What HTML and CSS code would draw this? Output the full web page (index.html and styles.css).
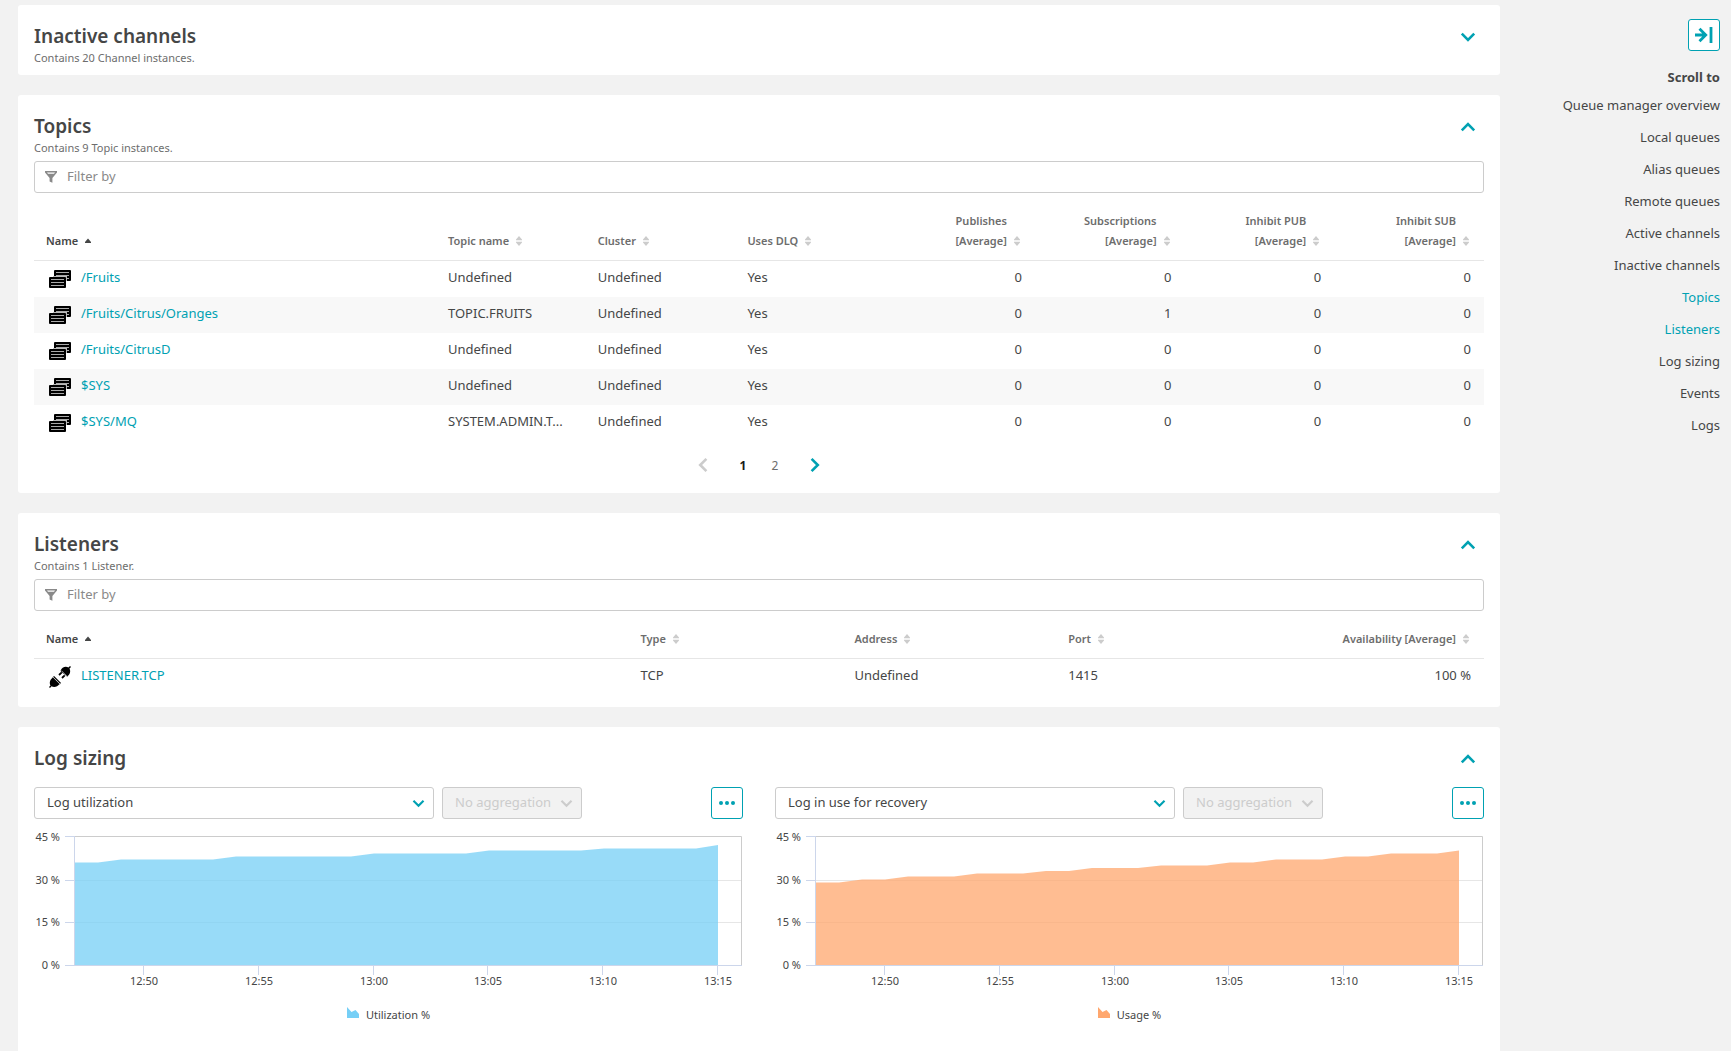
FILE: index.html
```html
<!DOCTYPE html>
<html lang="en">
<head>
  <meta charset="UTF-8">
  <meta name="viewport" content="width=device-width, initial-scale=1">
  <title>Queue manager</title>
  <link rel="stylesheet" href="styles.css">
</head>
<body>
  <!-- Shared icons -->
  <svg class="sprite" aria-hidden="true">
    <symbol id="down" viewBox="0 0 16 10"><path d="M1.8 1.6 8 7.8l6.2-6.2" fill="none" stroke="currentColor" stroke-width="2.6"/></symbol>
    <symbol id="up" viewBox="0 0 16 10"><path d="M1.8 8.4 8 2.2l6.2 6.2" fill="none" stroke="currentColor" stroke-width="2.6"/></symbol>
    <symbol id="prev" viewBox="0 0 10 16"><path d="M8.4 1.8 2.2 8l6.2 6.2" fill="none" stroke="currentColor" stroke-width="2.6"/></symbol>
    <symbol id="next" viewBox="0 0 10 16"><path d="M1.6 1.8 7.8 8l-6.2 6.2" fill="none" stroke="currentColor" stroke-width="2.6"/></symbol>
    <symbol id="sort" viewBox="0 0 6 10"><path d="M3 0 6 3.5v.8H0v-.8zM0 5.7h6v.8L3 10 0 6.500z" fill="currentColor"/></symbol>
    <symbol id="sorted" viewBox="0 0 6 10"><path d="M3 2.500 6 6v1H0V6z" fill="currentColor"/></symbol>
    <symbol id="funnel" viewBox="0 0 12 12"><path d="M0 0h12v1.6L7.400 7v4.800l-2.800-1.400V7L0 1.600zM2 1.500l1 1.200h6l1-1.200z" fill="currentColor" fill-rule="evenodd"/></symbol>
    <symbol id="topic" viewBox="0 0 22 22">
      <rect x="5" y="2" width="17" height="11" rx="1"/>
      <path d="M7 4.500h13M7 7.500h13M17 10.500h3" stroke="#aaa"/>
      <path d="M4 8h14v5h-14z" fill="#bbb"/>
      <rect x="0" y="9" width="17" height="11" rx="1"/>
      <path d="M2 11.500h13M2 14.500h13M2 17.500h13" stroke="#aaa"/>
    </symbol>
    <symbol id="plug" viewBox="0 0 22 22">
      <path d="M11.500 5c1.500-4 5-5 8-3.500L21 0l1 1-1.500 1.500C22 5.500 21 9 18 10.500z"/>
      <path d="M12.800 6.300 10 9M15.700 9.300 13 12" fill="none" stroke="#000" stroke-width="1.800"/>
      <path d="M12.600 4.600 18.700 10.700M3.400 11.300l7.300 7.300" fill="none" stroke="#888" stroke-width=".8"/>
      <path d="M4 11.500 10.500 18c-2 3-5.500 3.500-8 2.300L1 22l-1-1 1.500-1.500C0 16.500 1 13.500 4 11.500z"/>
      <path d="M4.600 10.400 11.600 17.400" fill="none" stroke="#000" stroke-width="1.300"/>
    </symbol>
    <symbol id="area" viewBox="0 0 12 11"><path d="M0 11V0l4.500 5L8.500 3 12 7v4z" fill="currentColor"/></symbol>
  </svg>

  <main class="main">
    <section class="card">
      <div class="card-head">
        <div>
          <h2>Inactive channels</h2>
          <p>Contains 20 Channel instances.</p>
        </div>
        <button class="toggle" aria-label="Expand"><svg><use href="#down"/></svg></button>
      </div>
    </section>

    <section class="card card-topics">
      <div class="card-head">
        <div>
          <h2>Topics</h2>
          <p>Contains 9 Topic instances.</p>
        </div>
        <button class="toggle" aria-label="Collapse"><svg><use href="#up"/></svg></button>
      </div>
      <label class="filter">
        <svg><use href="#funnel"/></svg>
        <input type="text" placeholder="Filter by" aria-label="Filter topics">
      </label>
      <table class="topics">
        <thead>
          <tr>
            <th class="name"><button class="active">Name <svg><use href="#sorted"/></svg></button></th>
            <th><button>Topic name <svg><use href="#sort"/></svg></button></th>
            <th><button>Cluster <svg><use href="#sort"/></svg></button></th>
            <th><button>Uses DLQ <svg><use href="#sort"/></svg></button></th>
            <th class="num"><button><span>Publishes<br>[Average]</span> <svg><use href="#sort"/></svg></button></th>
            <th class="num"><button><span>Subscriptions<br>[Average]</span> <svg><use href="#sort"/></svg></button></th>
            <th class="num"><button><span>Inhibit PUB<br>[Average]</span> <svg><use href="#sort"/></svg></button></th>
            <th class="num"><button><span>Inhibit SUB<br>[Average]</span> <svg><use href="#sort"/></svg></button></th>
          </tr>
        </thead>
        <tbody>
          <tr>
            <td><div class="entity"><svg><use href="#topic"/></svg><a href="#">/Fruits</a></div></td>
            <td>Undefined</td><td>Undefined</td><td>Yes</td>
            <td class="num">0</td><td class="num">0</td><td class="num">0</td><td class="num">0</td>
          </tr>
          <tr>
            <td><div class="entity"><svg><use href="#topic"/></svg><a href="#">/Fruits/Citrus/Oranges</a></div></td>
            <td>TOPIC.FRUITS</td><td>Undefined</td><td>Yes</td>
            <td class="num">0</td><td class="num">1</td><td class="num">0</td><td class="num">0</td>
          </tr>
          <tr>
            <td><div class="entity"><svg><use href="#topic"/></svg><a href="#">/Fruits/CitrusD</a></div></td>
            <td>Undefined</td><td>Undefined</td><td>Yes</td>
            <td class="num">0</td><td class="num">0</td><td class="num">0</td><td class="num">0</td>
          </tr>
          <tr>
            <td><div class="entity"><svg><use href="#topic"/></svg><a href="#">$SYS</a></div></td>
            <td>Undefined</td><td>Undefined</td><td>Yes</td>
            <td class="num">0</td><td class="num">0</td><td class="num">0</td><td class="num">0</td>
          </tr>
          <tr>
            <td><div class="entity"><svg><use href="#topic"/></svg><a href="#">$SYS/MQ</a></div></td>
            <td>SYSTEM.ADMIN.T...</td><td>Undefined</td><td>Yes</td>
            <td class="num">0</td><td class="num">0</td><td class="num">0</td><td class="num">0</td>
          </tr>
        </tbody>
      </table>
      <nav class="pager" aria-label="Pages">
        <button class="arrow" disabled aria-label="Previous page"><svg><use href="#prev"/></svg></button>
        <button class="page current">1</button>
        <button class="page">2</button>
        <button class="arrow" aria-label="Next page"><svg><use href="#next"/></svg></button>
      </nav>
    </section>

    <section class="card card-listeners">
      <div class="card-head">
        <div>
          <h2>Listeners</h2>
          <p>Contains 1 Listener.</p>
        </div>
        <button class="toggle" aria-label="Collapse"><svg><use href="#up"/></svg></button>
      </div>
      <label class="filter">
        <svg><use href="#funnel"/></svg>
        <input type="text" placeholder="Filter by" aria-label="Filter listeners">
      </label>
      <table class="listeners">
        <thead>
          <tr>
            <th class="name"><button class="active">Name <svg><use href="#sorted"/></svg></button></th>
            <th><button>Type <svg><use href="#sort"/></svg></button></th>
            <th><button>Address <svg><use href="#sort"/></svg></button></th>
            <th><button>Port <svg><use href="#sort"/></svg></button></th>
            <th class="num"><button>Availability [Average] <svg><use href="#sort"/></svg></button></th>
          </tr>
        </thead>
        <tbody>
          <tr>
            <td><div class="entity"><svg><use href="#plug"/></svg><a href="#">LISTENER.TCP</a></div></td>
            <td>TCP</td><td>Undefined</td><td>1415</td><td class="num">100 %</td>
          </tr>
        </tbody>
      </table>
    </section>

    <section class="card card-log">
      <div class="card-head">
        <h2>Log sizing</h2>
        <button class="toggle" aria-label="Collapse"><svg><use href="#up"/></svg></button>
      </div>
      <div class="charts">
        <div class="chart">
          <div class="controls">
            <div class="select metric">
              <select aria-label="Metric"><option>Log utilization</option></select>
              <svg><use href="#down"/></svg>
            </div>
            <div class="select aggregation">
              <select aria-label="Aggregation" disabled><option>No aggregation</option></select>
              <svg><use href="#down"/></svg>
            </div>
            <button class="square more" aria-label="More">
              <svg viewBox="0 0 16 4"><circle cx="2" cy="2" r="2"/><circle cx="8" cy="2" r="2"/><circle cx="14" cy="2" r="2"/></svg>
            </button>
          </div>
          <svg class="plot" viewBox="0 0 709 160">
            <path class="grid" d="M41 54.500h667M41 96.500h667"/>
            <path class="frame" d="M40.500 10.500h667v129"/>
            <path class="fill blue" d="M40.500 139.500V36.500H64L87 33.500H179L202 30.500H317L340 27.500H432L455 24.500H547L570 22.500H662L684 19V139.500z"/>
            <path class="axis" d="M31 10.500h9M31 54.500h9M31 96.500h9M31 139.500h677M40.500 10v129M109.500 140v9M224.500 140v9M339.500 140v9M453.500 140v9M568.500 140v9M683.500 140v9"/>
            <g class="y-labels">
              <text x="26" y="15">45 %</text><text x="26" y="58">30 %</text><text x="26" y="100">15 %</text><text x="26" y="143">0 %</text>
            </g>
            <g class="x-labels">
              <text x="110" y="159">12:50</text><text x="225" y="159">12:55</text><text x="340" y="159">13:00</text><text x="454" y="159">13:05</text><text x="569" y="159">13:10</text><text x="684" y="159">13:15</text>
            </g>
          </svg>
          <div class="legend"><svg class="blue"><use href="#area"/></svg>Utilization %</div>
        </div>

        <div class="chart">
          <div class="controls">
            <div class="select metric">
              <select aria-label="Metric"><option>Log in use for recovery</option></select>
              <svg><use href="#down"/></svg>
            </div>
            <div class="select aggregation">
              <select aria-label="Aggregation" disabled><option>No aggregation</option></select>
              <svg><use href="#down"/></svg>
            </div>
            <button class="square more" aria-label="More">
              <svg viewBox="0 0 16 4"><circle cx="2" cy="2" r="2"/><circle cx="8" cy="2" r="2"/><circle cx="14" cy="2" r="2"/></svg>
            </button>
          </div>
          <svg class="plot" viewBox="0 0 709 160">
            <path class="grid" d="M41 54.500h667M41 96.500h667"/>
            <path class="frame" d="M40.500 10.500h667v129"/>
            <path class="fill orange" d="M40.500 139.500V56.500H64L87 53.500H110L133 50.500H179L202 47.500H248L271 45H294L317 42H363L386 39.500H432L455 36.500H478L501 33.500H547L570 30.500H593L616 27.500H662L684 24.500V139.500z"/>
            <path class="axis" d="M31 10.500h9M31 54.500h9M31 96.500h9M31 139.500h677M40.500 10v129M109.500 140v9M224.500 140v9M339.500 140v9M453.500 140v9M568.500 140v9M683.500 140v9"/>
            <g class="y-labels">
              <text x="26" y="15">45 %</text><text x="26" y="58">30 %</text><text x="26" y="100">15 %</text><text x="26" y="143">0 %</text>
            </g>
            <g class="x-labels">
              <text x="110" y="159">12:50</text><text x="225" y="159">12:55</text><text x="340" y="159">13:00</text><text x="454" y="159">13:05</text><text x="569" y="159">13:10</text><text x="684" y="159">13:15</text>
            </g>
          </svg>
          <div class="legend"><svg class="orange"><use href="#area"/></svg>Usage %</div>
        </div>
      </div>
    </section>
  </main>

  <aside class="sidebar">
    <button class="square" aria-label="Hide navigation">
      <svg class="collapse" viewBox="0 0 18 16"><path d="M0 8h9.500M4.500 1.800 10.700 8l-6.200 6.200M16 0v16" fill="none" stroke="currentColor" stroke-width="2.8"/></svg>
    </button>
    <h3>Scroll to</h3>
    <nav>
      <a href="#">Queue manager overview</a>
      <a href="#">Local queues</a>
      <a href="#">Alias queues</a>
      <a href="#">Remote queues</a>
      <a href="#">Active channels</a>
      <a href="#">Inactive channels</a>
      <a href="#" class="active">Topics</a>
      <a href="#" class="active">Listeners</a>
      <a href="#">Log sizing</a>
      <a href="#">Events</a>
      <a href="#">Logs</a>
    </nav>
  </aside>
</body>
</html>
```
FILE: styles.css
```css
* {
  box-sizing: border-box;
}
body {
  margin: 0;
  min-height: 100vh;
  display: flex;
  background: #f2f2f2;
  color: #454646;
  font-family: "Noto Sans", "Open Sans", sans-serif;
  font-size: 13px;
}
h2, h3, p {
  margin: 0;
}
a {
  color: #00a1b2;
  text-decoration: none;
}
button, input, select {
  font: inherit;
  color: inherit;
}
button {
  padding: 0;
  border: 0;
  background: none;
}
svg {
  display: block;
  flex: none;
}
.sprite {
  position: absolute;
  width: 0;
  height: 0;
}

/* Cards */
.main {
  flex: 1;
  min-width: 0;
  display: flex;
  flex-direction: column;
  gap: 20px;
  padding: 5px 0 0 18px;
}
.card {
  background: #fff;
  border-radius: 3px;
  padding: 19px 16px 7px;
}
.card-topics { padding-bottom: 16px; }
.card-listeners { padding-bottom: 12px; }
.card-log {
  flex: 1;
  border-radius: 3px 3px 0 0;
}
.card-head {
  display: flex;
  justify-content: space-between;
  align-items: flex-start;
}
.card-head h2 {
  font-size: 19px;
  line-height: 24px;
  font-weight: 600;
}
.card-head p {
  font-size: 11px;
  line-height: 20px;
  color: #6d6d6d;
}
.toggle {
  width: 32px;
  height: 26px;
  display: flex;
  align-items: center;
  justify-content: center;
  color: #00a1b2;
}
.toggle svg {
  width: 16px;
  height: 10px;
}

/* Filter box */
.filter {
  display: flex;
  align-items: center;
  gap: 10px;
  height: 32px;
  margin-top: 3px;
  padding: 0 10px;
  border: 1px solid #ccc;
  border-radius: 3px;
  color: #898989;
}
.filter svg {
  width: 12px;
  height: 12px;
}
.filter input {
  flex: 1;
  border: 0;
  padding: 0 0 2px;
  outline: none;
  background: none;
}
.filter input::placeholder {
  color: #898989;
}

/* Tables */
table {
  width: 100%;
  table-layout: fixed;
  border-collapse: collapse;
}
th {
  padding: 18px 12px 9px;
  border-bottom: 1px solid #e6e6e6;
  vertical-align: bottom;
  text-align: left;
  line-height: 20px;
}
.listeners .name { width: 41%; }
.topics .name { width: 402px; }
th button {
  display: inline-flex;
  align-items: flex-end;
  gap: 7px;
  vertical-align: bottom;
  text-align: inherit;
  font-size: 11px;
  font-weight: 600;
  line-height: 20px;
  color: #6d6d6d;
}
th button.active {
  color: #454646;
}
th svg {
  width: 6px;
  height: 10px;
  margin-bottom: 5px;
  color: #ccc;
}
th .active svg {
  color: #454646;
}
td {
  height: 36px;
  padding: 0 12px;
  line-height: 32px;
  vertical-align: top;
  white-space: nowrap;
}
.num {
  text-align: right;
  padding-right: 13px;
}
th.num {
  padding-right: 15px;
}
tbody tr:nth-child(even) {
  background: #f8f8f8;
}
.entity {
  display: flex;
  gap: 10px;
  height: 36px;
  padding-left: 3px;
}
.entity svg {
  width: 22px;
  height: 22px;
  align-self: center;
}

/* Pagination */
.pager {
  display: flex;
  justify-content: center;
  gap: 8px;
  margin-top: 12px;
}
.pager button {
  width: 24px;
  height: 24px;
  font-size: 12px;
  color: #6d6d6d;
}
.pager .arrow {
  width: 40px;
  display: flex;
  align-items: center;
  justify-content: center;
  color: #00a1b2;
}
.pager .arrow:disabled {
  color: #ccc;
}
.pager svg {
  width: 10px;
  height: 16px;
}
.pager .current {
  font-weight: 700;
  color: #191919;
}

/* Charts */
.charts {
  display: grid;
  grid-template-columns: 1fr 1fr;
  gap: 32px;
  margin-top: 15px;
}
.controls {
  display: flex;
  gap: 8px;
}
.select {
  position: relative;
}
.metric {
  flex: 0 1 400px;
}
.aggregation {
  width: 140px;
}
.select select {
  appearance: none;
  width: 100%;
  height: 32px;
  padding: 0 12px 2px;
  border: 1px solid #ccc;
  border-radius: 3px;
  background: #fff;
}
.select select:disabled {
  background: #f2f2f2;
  color: #ccc;
  opacity: 1;
}
.select svg {
  position: absolute;
  right: 9px;
  top: 12px;
  width: 13px;
  height: 9px;
  color: #00a1b2;
  pointer-events: none;
}
.select.aggregation svg {
  color: #ccc;
}
.square {
  width: 32px;
  height: 32px;
  display: flex;
  align-items: center;
  justify-content: center;
  border: 1px solid #00a1b2;
  border-radius: 3px;
  background: #fff;
  color: #00a1b2;
}
.more {
  margin-left: auto;
}
.more svg {
  width: 16px;
  height: 4px;
  fill: currentColor;
}
.plot {
  width: 100%;
  margin-top: 7px;
  font-size: 11px;
  overflow: visible;
}
.grid, .frame, .axis {
  fill: none;
  stroke: #e6e6e6;
}
.frame { stroke: #ccc; }
.axis { stroke: #ccd6eb; }
.fill { opacity: .75; }
.fill.blue { fill: #76cff6; }
.fill.orange { fill: #ffa76e; }
.plot text { fill: #454646; }
.y-labels { text-anchor: end; }
.x-labels { text-anchor: middle; }
.legend {
  display: flex;
  justify-content: center;
  gap: 7px;
  margin-top: 19px;
  font-size: 11px;
  line-height: 20px;
}
.legend svg {
  width: 12px;
  height: 11px;
  margin-top: 2px;
}
.legend .blue { color: #76cff6; }
.legend .orange { color: #ffa76e; }

/* Right side navigation */
.sidebar {
  width: 231px;
  padding: 19px 11px 0 0;
  display: flex;
  flex-direction: column;
  align-items: flex-end;
}
.sidebar h3 {
  margin-top: 14px;
  font-size: 13px;
  line-height: 24px;
}
.sidebar nav a {
  display: block;
  text-align: right;
  line-height: 32px;
  color: #454646;
}
.sidebar nav a.active {
  color: #00a1b2;
}
.collapse {
  width: 18px;
  height: 16px;
}
```
